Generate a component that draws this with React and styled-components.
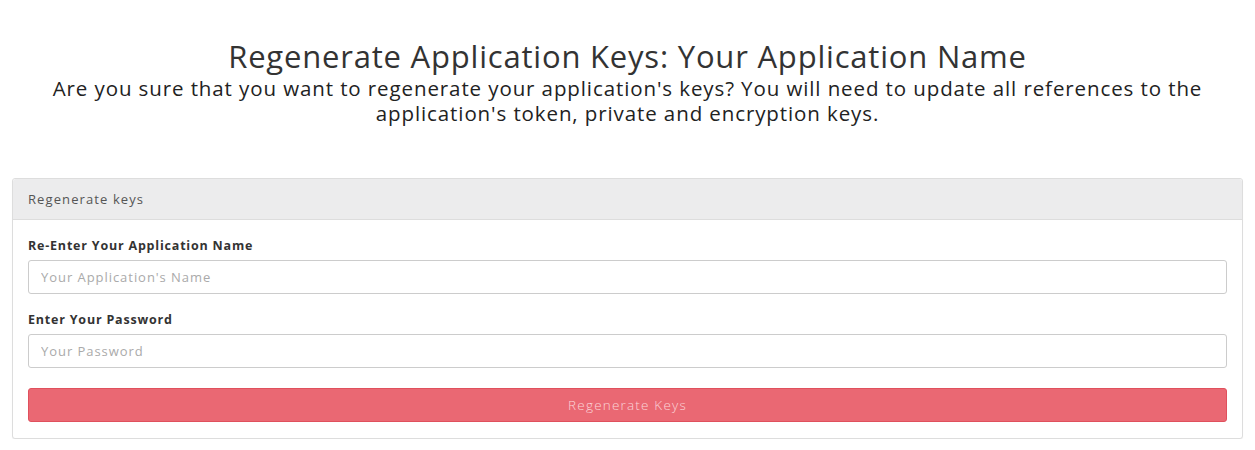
import React from "react";
import styled, { createGlobalStyle } from "styled-components";

const GlobalStyle = createGlobalStyle`
    body {
        margin: 0;
        background: #fff;
        font-family: "Open Sans", "Lato", sans-serif;
        color: #333;
    }
    * { box-sizing: border-box; }
`;

const Page = styled.div`
    padding: 0 12px;
`;

const Intro = styled.div`
    text-align: center;
    padding-top: 37px;
    margin-bottom: 52px;
`;

const Title = styled.h1`
    font-size: 31px;
    font-weight: 400;
    letter-spacing: 0.8px;
    margin: 0;
    line-height: 38px;
    color: #333;
`;

const Lead = styled.p`
    font-size: 20.5px;
    line-height: 25px;
    letter-spacing: 0.9px;
    margin: 1px 40px 0;
    color: #222;
`;

const Panel = styled.div`
    border: 1px solid #ddd;
    border-radius: 3px;
    background: #fff;
    box-shadow: 0 1px 1px rgba(0, 0, 0, 0.05);
`;

const PanelHeading = styled.div`
    background: #ececed;
    border-bottom: 1px solid #ddd;
    height: 41px;
    padding: 0 15px;
    display: flex;
    align-items: center;
    font-size: 13px;
    color: #555;
    letter-spacing: 1.1px;
    border-radius: 3px 3px 0 0;
`;

const PanelBody = styled.div`
    padding: 17px 15px 16px;
    display: flex;
    flex-direction: column;
`;

const Group = styled.div`
    display: flex;
    flex-direction: column;
    margin-bottom: 17px;
`;

const Label = styled.label`
    font-size: 12.5px;
    font-weight: 700;
    color: #333;
    letter-spacing: 0.8px;
    margin-bottom: 6px;
    line-height: 17px;
`;

const Input = styled.input`
    height: 34px;
    border: 1px solid #ccc;
    border-radius: 3px;
    padding: 0 12px;
    font-family: inherit;
    font-size: 13px;
    letter-spacing: 0.95px;
    color: #555;
    &::placeholder { color: #aaa; }
`;

const Button = styled.button`
    margin-top: 3px;
    height: 34px;
    border: 1px solid #e0505d;
    border-radius: 3px;
    background: #ea6873;
    color: #fbd4d8;
    font-family: inherit;
    font-size: 13.5px;
    font-weight: 300;
    letter-spacing: 1.2px;
`;

export default function App() {
    return (
        <>
            <GlobalStyle />
            <Page>
                <Intro>
                    <Title>Regenerate Application Keys: Your Application Name</Title>
                    <Lead>
                        Are you sure that you want to regenerate your application's keys? You will need to update all references to the application's token, private and encryption keys.
                    </Lead>
                </Intro>
                <Panel>
                    <PanelHeading>Regenerate keys</PanelHeading>
                    <PanelBody>
                        <Group>
                            <Label>Re-Enter Your Application Name</Label>
                            <Input placeholder="Your Application's Name" />
                        </Group>
                        <Group>
                            <Label>Enter Your Password</Label>
                            <Input type="password" placeholder="Your Password" />
                        </Group>
                        <Button>Regenerate Keys</Button>
                    </PanelBody>
                </Panel>
            </Page>
        </>
    );
}
